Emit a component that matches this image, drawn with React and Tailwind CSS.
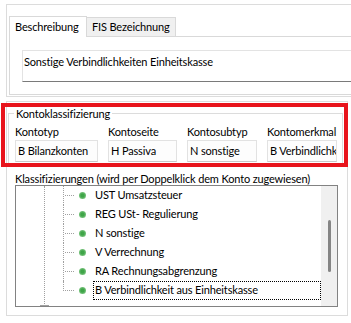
const rows = [
  "UST Umsatzsteuer",
  "REG USt- Regulierung",
  "N sonstige",
  "V Verrechnung",
  "RA Rechnungsabgrenzung",
  "B Verbindlichkeit aus Einheitskasse",
];

const fields = [
  { label: "Kontotyp", value: "B Bilanzkonten", w: "w-[83px]" },
  { label: "Kontoseite", value: "H Passiva", w: "w-[69px]" },
  { label: "Kontosubtyp", value: "N sonstige", w: "w-[70px]" },
  { label: "Kontomerkmal", value: "B Verbindlichk", w: "w-[70px]" },
];

function TreeRow({ text, last, selected }) {
  return (
    <div className="relative flex h-[19px] items-center">
      {/* vertical connector of the parent level */}
      <div
        className={
          "absolute left-[47px] top-0 border-l border-dotted border-[#a0a0a0] " +
          (last ? "h-[10px]" : "h-[19px]")
        }
      />
      <div className="ml-[49px] w-[9px] border-t border-dotted border-[#a0a0a0]" />
      <div className="ml-[5px] h-[7px] w-[7px] rounded-full bg-[radial-gradient(circle,#3fa548_30%,#a3d9a5_100%)]" />
      <div
        className={
          "ml-[7px] flex h-[19px] w-[228px] items-center whitespace-nowrap pl-px border " +
          (selected ? "border-dotted border-black" : "border-transparent")
        }
      >
        {text}
      </div>
    </div>
  );
}

export default function App() {
  return (
    <div
      className="relative h-[323px] w-[351px] overflow-hidden bg-white text-[11px] tracking-[-0.15px] text-black"
      style={{ fontFamily: "Lato, 'Liberation Sans', sans-serif" }}
    >
      {/* top panel with tabs */}
      <div className="ml-[6px] mt-[4px] h-[93px] w-[400px] border border-[#dcdcdc] bg-white pl-[2px] pt-[11px]">
        <div className="flex h-[20px] items-end">
          <div className="relative z-10 -mb-px flex h-[21px] w-[78px] items-center border-x border-t border-[#d9d9d9] bg-white pl-[5px]">
            Beschreibung
          </div>
          <div className="flex h-[19px] w-[89px] items-center border-r border-t border-[#d9d9d9] bg-[#f0f0f0] pl-[5px]">
            FIS Bezeichnung
          </div>
        </div>
        <div className="h-[59px] border border-[#d9d9d9] bg-white pl-[12px] pt-[13px]">
          <div className="h-[32px] w-[400px] border border-[#e3e3e3] border-b-[#7a7a7a] pl-px pt-[3px] leading-[16px]">
            Sonstige Verbindlichkeiten Einheitskasse
          </div>
        </div>
      </div>

      {/* lower panel */}
      <div className="ml-[6px] mt-[4px] h-[215px] w-[342px] border border-[#dcdcdc] bg-white">
        <div className="relative ml-px mt-[11px] h-[53px] w-[335px] border border-[#dcdcdc] pl-[6px] pt-[10px]">
          <div className="absolute -top-[8px] left-[5px] bg-white px-[2px] leading-[16px]">
            Kontoklassifizierung
          </div>
          <div className="flex gap-[10px]">
            {fields.map((f) => (
              <div key={f.label} className={f.w}>
                <div className="leading-[16px]">{f.label}</div>
                <div className="flex h-[22px] items-center overflow-hidden whitespace-nowrap border border-[#e2e2e2] border-b-[#c8c8c8] bg-[#fdfdfd] pl-[2px]">
                  {f.value}
                </div>
              </div>
            ))}
          </div>
          {/* red annotation frame */}
          <div className="pointer-events-none absolute -bottom-[2px] -left-[8px] -right-[6px] -top-[11px] border-[4px] border-[#e8141c]" />
        </div>

        <div className="ml-[8px] mt-[6px] leading-[13px]">
          Klassifizierungen (wird per Doppelklick dem Konto zugewiesen)
        </div>
        <div className="ml-[8px] flex h-[122px] w-[323px] border border-[#828282] bg-white">
          <div className="relative flex-1 overflow-hidden">
            <div className="absolute left-[28px] top-0 h-full border-l border-dotted border-[#a0a0a0]" />
            <div className="absolute bottom-0 left-[24px] h-px w-[9px] bg-[#a0a0a0]" />
            {rows.map((r, i) => (
              <TreeRow key={r} text={r} last={i === rows.length - 1} selected={i === rows.length - 1} />
            ))}
          </div>
          <div className="flex w-[16px] justify-center bg-[#f0f0f0] pt-[34px]">
            <div className="h-[52px] w-[3px] rounded-full bg-[#858585]" />
          </div>
        </div>
      </div>
    </div>
  );
}
